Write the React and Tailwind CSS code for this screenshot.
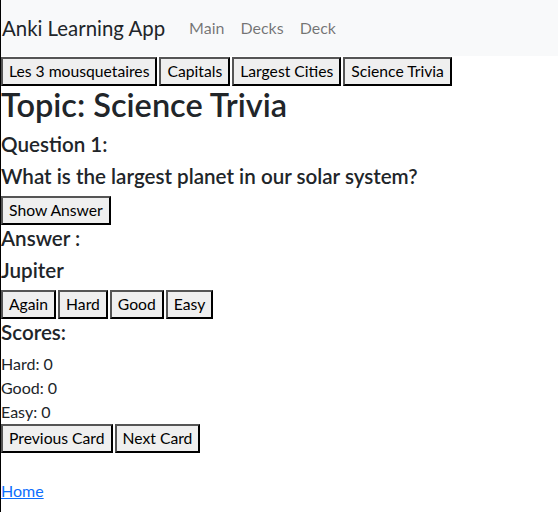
import React from "react";

function Btn({ children }) {
  return (
    <button className="border-2 border-t-[#555555] border-l-[#555555] border-b-black border-r-black bg-[#efefef] px-1.5 py-px text-[15.7px] leading-[23px] text-black">
      {children}
    </button>
  );
}

export default function App() {
  return (
    <div className="min-h-[512px] border-l border-black font-['Lato',sans-serif] text-[#212529] text-[16px] leading-6">
      <nav className="flex items-center bg-[#f8f9fa] h-[56px] py-2">
        <span className="text-[20.4px] leading-[30px] py-[5px] pl-px mr-4">Anki Learning App</span>
        <div className="flex text-[16px] leading-6 text-[rgba(0,0,0,0.55)]">
          <span className="px-2">Main</span>
          <span className="px-2">Decks</span>
          <span className="px-2">Deck</span>
        </div>
      </nav>
      <div className="flex gap-[2px] mt-px">
        <Btn>Les 3 mousquetaires</Btn>
        <Btn>Capitals</Btn>
        <Btn>Largest Cities</Btn>
        <Btn>Science Trivia</Btn>
      </div>
      <h1 className="text-[32.5px] leading-[38px] font-semibold mb-2">Topic: Science Trivia</h1>
      <h5 className="text-[20.6px] leading-6 font-semibold mb-2">Question 1:</h5>
      <h5 className="text-[20.6px] leading-6 font-semibold mb-2">What is the largest planet in our solar system?</h5>
      <div className="flex mt-[3px]">
        <Btn>Show Answer</Btn>
      </div>
      <h5 className="text-[20.6px] leading-6 font-semibold mb-2 mt-px">Answer :</h5>
      <h5 className="text-[20.6px] leading-6 font-semibold mb-2">Jupiter</h5>
      <div className="flex gap-[2px] mt-px">
        <Btn>Again</Btn>
        <Btn>Hard</Btn>
        <Btn>Good</Btn>
        <Btn>Easy</Btn>
      </div>
      <h5 className="text-[20.6px] leading-6 font-semibold mb-2 mt-px">Scores:</h5>
      <div>Hard: 0</div>
      <div>Good: 0</div>
      <div>Easy: 0</div>
      <div className="flex gap-[2px]">
        <Btn>Previous Card</Btn>
        <Btn>Next Card</Btn>
      </div>
      <div className="mt-[26px]">
        <a href="#" className="text-[#0d6efd] underline">Home</a>
      </div>
    </div>
  );
}
